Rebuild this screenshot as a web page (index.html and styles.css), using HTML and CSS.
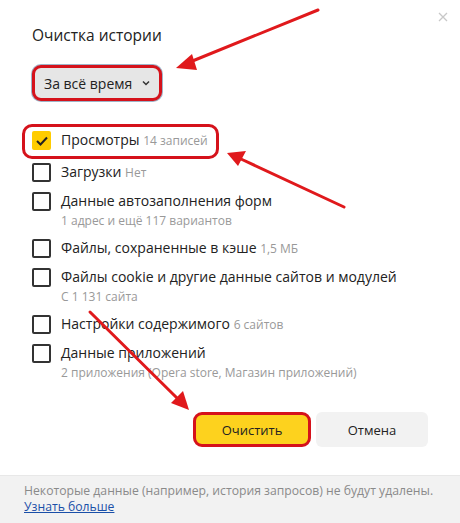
FILE: index.html
```html
<!DOCTYPE html>
<html lang="ru">
<head>
    <meta charset="UTF-8">
    <meta name="viewport" content="width=device-width, initial-scale=1.0">
    <title>Очистка истории</title>

    <link rel="stylesheet" href="styles.css">
</head>
<body>
    <div class="dialog">
        <div class="content">
            <button class="close" aria-label="Закрыть">
                <svg width="10" height="10" viewBox="0 0 10 10"><path d="M1 1L9 9M9 1L1 9" stroke="#c8c8c8" stroke-width="1.3"/></svg>
            </button>

            <h1 class="title">Очистка истории</h1>

            <div class="period">
                <span>За всё время</span>
                <svg width="8" height="6" viewBox="0 0 8 6"><path d="M1 1.5L4 4.5L7 1.5" fill="none" stroke="#333" stroke-width="1.5"/></svg>
            </div>

            <ul class="options">
                <li class="option marked">
                    <span class="check checked">
                        <svg width="12" height="10" viewBox="0 0 12 10"><path d="M1 5L4.5 8.5L11 1.5" fill="none" stroke="#222" stroke-width="2"/></svg>
                    </span>
                    <span class="label">Просмотры <small>14 записей</small></span>
                </li>
                <li class="option">
                    <span class="check"></span>
                    <span class="label">Загрузки <small>Нет</small></span>
                </li>
                <li class="option">
                    <span class="check"></span>
                    <div class="label">
                        Данные автозаполнения форм
                        <div class="sub">1 адрес и ещё 117 вариантов</div>
                    </div>
                </li>
                <li class="option">
                    <span class="check"></span>
                    <span class="label">Файлы, сохраненные в кэше <small>1,5 МБ</small></span>
                </li>
                <li class="option">
                    <span class="check"></span>
                    <div class="label">
                        Файлы cookie и другие данные сайтов и модулей
                        <div class="sub">С 1 131 сайта</div>
                    </div>
                </li>
                <li class="option">
                    <span class="check"></span>
                    <span class="label">Настройки содержимого <small>6 сайтов</small></span>
                </li>
                <li class="option">
                    <span class="check"></span>
                    <div class="label">
                        Данные приложений
                        <div class="sub">2 приложения (Opera store, Магазин приложений)</div>
                    </div>
                </li>
            </ul>

            <div class="actions">
                <button class="btn btn-primary">Очистить</button>
                <button class="btn">Отмена</button>
            </div>
        </div>

        <div class="footer">
            Некоторые данные (например, история запросов) не будут удалены.<br>
            <a href="#">Узнать больше</a>
        </div>
    </div>

    <!-- red annotation arrows -->
    <svg class="arrows" width="460" height="523" viewBox="0 0 460 523">
        <g stroke="#e0191c" stroke-width="3" stroke-linecap="round">
            <line x1="318" y1="10" x2="190" y2="62"/>
            <line x1="344" y1="207" x2="241" y2="159"/>
            <line x1="90" y1="312" x2="178" y2="399"/>
        </g>
        <g fill="#e0191c">
            <polygon points="176,68 192,54 197,70"/>
            <polygon points="227,153 246,151 238,166"/>
            <polygon points="189,410 171,403 183,391"/>
        </g>
    </svg>
</body>
</html>
```

FILE: styles.css
```css
* {
    box-sizing: border-box;
}

body {
    margin: 0;
    font-family: "Open Sans", "Noto Sans", sans-serif;
    color: #222;
    background: #fff;
}

.dialog {
    width: 460px;
    height: 523px;
    display: flex;
    flex-direction: column;
}

.content {
    position: relative;
    flex: 1;
    padding: 24px 32px 0;
}

.close {
    position: absolute;
    top: 8px;
    right: 10px;
    border: 0;
    background: none;
    padding: 2px;
}

.title {
    margin: 0;
    font-size: 15.5px;
    font-weight: normal;
    line-height: 22px;
}

.period {
    display: inline-flex;
    align-items: center;
    gap: 10px;
    margin-top: 19px;
    height: 36px;
    padding: 0 9px 0 9px;
    background: #e6e6e6;
    border: 3px solid #d5121b;
    border-radius: 9px;
    box-shadow: 0 0 0 1px #9fb4c8;
    font-size: 14px;
}

.options {
    list-style: none;
    margin: 23px 0 0;
    padding: 0;
}

.option {
    display: flex;
    align-items: flex-start;
    gap: 10px;
    font-size: 14px;
    line-height: 20px;
    margin-bottom: 8px;
}

.option.marked {
    width: fit-content;
    margin: 0 0 3px -10px;
    padding: 3px 8px 5px 7px;
    border: 3px solid #d5121b;
    border-radius: 10px;
}

.check {
    flex: none;
    width: 19px;
    height: 19px;
    margin-top: 1px;
    border: 2px solid #333;
    border-radius: 2px;
}

.check.checked {
    display: flex;
    align-items: center;
    justify-content: center;
    background: #fc0;
    border: 0;
}

.label small {
    font-size: 12px;
    color: #999;
}

.sub {
    font-size: 12px;
    color: #999;
    line-height: 19px;
}

.actions {
    display: flex;
    justify-content: flex-end;
    gap: 5px;
    margin-top: 30px;
}

.btn {
    width: 112px;
    height: 35px;
    border: 0;
    border-radius: 6px;
    background: #f2f2f2;
    font-family: inherit;
    font-size: 13px;
    color: #222;
}

.btn-primary {
    width: 118px;
    background: #fdd21e;
    border: 3px solid #d5121b;
    border-radius: 9px;
}

.footer {
    height: 48px;
    padding: 7px 24px 0;
    background: #f2f2f2;
    border-top: 1px solid #e8e8e8;
    font-size: 12.2px;
    line-height: 16px;
    color: #8a8a8a;
    white-space: nowrap;
}

.footer a {
    color: #1a4fa8;
}

.arrows {
    position: absolute;
    left: 0;
    top: 0;
    pointer-events: none;
}
```
